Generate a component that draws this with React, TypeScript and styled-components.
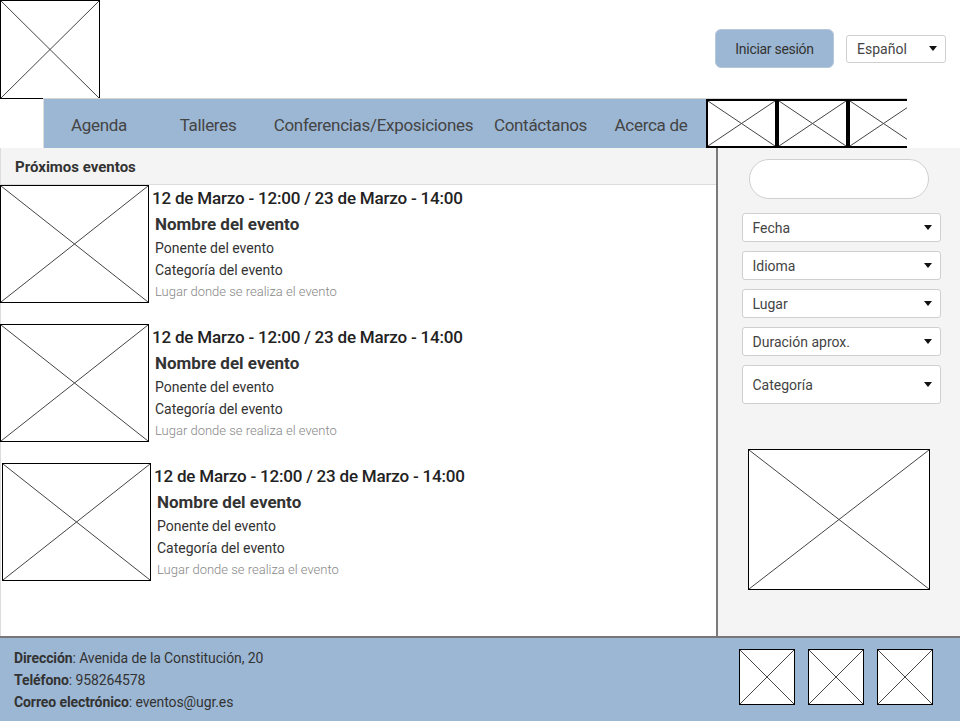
import * as React from 'react'
import styled, { createGlobalStyle } from 'styled-components'

const blue = '#9cb7d4'
const font = `Roboto, "Noto Sans", "Liberation Sans", sans-serif`

const GlobalStyle = createGlobalStyle`
  html, body {
    margin: 0;
    padding: 0;
    background: #fff;
  }
  body {
    font-family: ${font};
    color: #333;
  }
  * {
    box-sizing: border-box;
  }
`

const Page = styled.div`
  width: 960px;
  height: 721px;
  display: flex;
  flex-direction: column;
  overflow: hidden;
`

const Header = styled.header`
  height: 98px;
  display: flex;
  justify-content: space-between;
  align-items: flex-start;
`

const Actions = styled.div`
  display: flex;
  align-items: center;
  gap: 12px;
  margin-top: 29px;
  margin-right: 14px;
`

const LoginButton = styled.button`
  width: 119px;
  height: 39px;
  background: ${blue};
  border: 1px solid #b7c7da;
  border-radius: 6px;
  font-family: ${font};
  font-size: 14px;
  color: #333;
  letter-spacing: -0.3px;
  cursor: pointer;
`

const SelectBox = styled.div<{ $w?: number; $h?: number }>`
  width: ${p => p.$w ?? 199}px;
  height: ${p => p.$h ?? 29}px;
  display: flex;
  align-items: center;
  justify-content: space-between;
  padding: 0 8px 0 10px;
  background: #fff;
  border: 1px solid #cfcfcf;
  border-radius: 3px;
  font-size: 14px;
  color: #444;
`

const Caret = styled.span`
  width: 0;
  height: 0;
  border-left: 4px solid transparent;
  border-right: 4px solid transparent;
  border-top: 5px solid #111;
`

const PlaceholderFrame = styled.div<{ $w: number; $h: number; $bw?: number }>`
  width: ${p => p.$w}px;
  height: ${p => p.$h}px;
  flex: none;
  border: ${p => p.$bw ?? 1}px solid #000;
  background: #fff;
  svg {
    display: block;
    width: 100%;
    height: 100%;
  }
`

const Placeholder = ({ w, h, bw }: { w: number; h: number; bw?: number }) => (
  <PlaceholderFrame $w={w} $h={h} $bw={bw}>
    <svg viewBox="0 0 100 100" preserveAspectRatio="none">
      <line x1="0" y1="0" x2="100" y2="100" stroke="#444" strokeWidth="1" vectorEffect="non-scaling-stroke" />
      <line x1="100" y1="0" x2="0" y2="100" stroke="#444" strokeWidth="1" vectorEffect="non-scaling-stroke" />
    </svg>
  </PlaceholderFrame>
)

const Nav = styled.nav`
  display: flex;
  height: 50px;
  margin-left: 43px;
  width: 864px;
  border-top: 1px solid #d6d6d6;
`

const NavItems = styled.ul`
  display: flex;
  margin: 0;
  padding: 0;
  list-style: none;
  background: ${blue};
  border-left: 1px solid #dcdcdc;
`

const NavItem = styled.li<{ $w: number }>`
  width: ${p => p.$w}px;
  display: flex;
  align-items: center;
  justify-content: center;
  padding-top: 2px;
  font-size: 17px;
  color: #444;
  letter-spacing: -0.3px;
  white-space: nowrap;
`

const NavPics = styled.div`
  display: flex;
  width: 202px;
  overflow: hidden;
`

const Main = styled.main`
  flex: 1;
  display: flex;
  min-height: 0;
`

const Events = styled.section`
  width: 716px;
  border-left: 1px solid #dcdcdc;
  display: flex;
  flex-direction: column;
`

const SectionTitle = styled.h2`
  margin: 0;
  height: 37px;
  padding: 2px 14px 0;
  display: flex;
  align-items: center;
  background: #f4f4f4;
  border-bottom: 1px solid #dcdcdc;
  font-size: 15px;
  font-weight: 700;
  color: #333;
`

const EventList = styled.div`
  display: flex;
  flex-direction: column;
  gap: 21px;
`

const EventRow = styled.article<{ $shift?: number }>`
  display: flex;
  gap: 3px;
  margin-left: ${p => (p.$shift ?? 0) - 1}px;
`

const EventText = styled.div`
  display: flex;
  flex-direction: column;
  padding-top: 1px;
`

const EventDate = styled.div`
  font-size: 17px;
  font-weight: 500;
  line-height: 25px;
  color: #222;
  letter-spacing: -0.2px;
`

const EventName = styled.div`
  font-size: 17px;
  font-weight: 700;
  line-height: 26px;
  color: #333;
  margin-left: 3px;
`

const EventLine = styled.div<{ $muted?: boolean }>`
  font-size: ${p => (p.$muted ? 13 : 14)}px;
  line-height: 22px;
  color: ${p => (p.$muted ? '#888' : '#333')};
  font-weight: ${p => (p.$muted ? 300 : 400)};
  margin-left: 3px;
`

const Sidebar = styled.aside`
  flex: 1;
  background: #f4f4f4;
  border-left: 2px solid #7a7a7a;
  display: flex;
  flex-direction: column;
  align-items: center;
  padding-top: 11px;
`

const Search = styled.input`
  width: 180px;
  height: 40px;
  border: 1px solid #d0d0d0;
  border-radius: 20px;
  background: #fff;
  outline: none;
  margin-bottom: 14px;
`

const Filters = styled.div`
  display: flex;
  flex-direction: column;
  gap: 9px;
  margin-left: 4px;
  margin-bottom: 45px;
`

const Footer = styled.footer`
  height: 85px;
  background: ${blue};
  border-top: 2px solid #777;
  display: flex;
  justify-content: space-between;
  align-items: flex-start;
  padding: 8px 27px 0 14px;
`

const Contact = styled.div`
  display: flex;
  flex-direction: column;
  padding-top: 1px;
`

const ContactLine = styled.div`
  font-size: 14px;
  line-height: 22px;
  color: #333;
  letter-spacing: -0.1px;
  b {
    font-weight: 700;
  }
`

const Social = styled.div`
  display: flex;
  gap: 13px;
  padding-top: 3px;
`

const navLinks: [string, number][] = [
  ['Agenda', 110],
  ['Talleres', 108],
  ['Conferencias/Exposiciones', 223],
  ['Contáctanos', 111],
  ['Acerca de', 110],
]

const filters: [string, number][] = [
  ['Fecha', 29],
  ['Idioma', 29],
  ['Lugar', 29],
  ['Duración aprox.', 29],
  ['Categoría', 39],
]

const events = [0, 0, 2]

export default function App() {
  return (
    <Page>
      <GlobalStyle />
      <Header>
        <Placeholder w={100} h={99} />
        <Actions>
          <LoginButton>Iniciar sesión</LoginButton>
          <SelectBox $w={100} $h={28}>
            Español
            <Caret />
          </SelectBox>
        </Actions>
      </Header>
      <Nav>
        <NavItems>
          {navLinks.map(([label, w]) => (
            <NavItem key={label} $w={w}>
              {label}
            </NavItem>
          ))}
        </NavItems>
        <NavPics>
          <Placeholder w={71} h={49} bw={2} />
          <Placeholder w={71} h={49} bw={2} />
          <Placeholder w={71} h={49} bw={2} />
        </NavPics>
      </Nav>
      <Main>
        <Events>
          <SectionTitle>Próximos eventos</SectionTitle>
          <EventList>
            {events.map((shift, i) => (
              <EventRow key={i} $shift={shift}>
                <Placeholder w={149} h={118} />
                <EventText>
                  <EventDate>12 de Marzo - 12:00 / 23 de Marzo - 14:00</EventDate>
                  <EventName>Nombre del evento</EventName>
                  <EventLine>Ponente del evento</EventLine>
                  <EventLine>Categoría del evento</EventLine>
                  <EventLine $muted>Lugar donde se realiza el evento</EventLine>
                </EventText>
              </EventRow>
            ))}
          </EventList>
        </Events>
        <Sidebar>
          <Search aria-label="Buscar" />
          <Filters>
            {filters.map(([label, h]) => (
              <SelectBox key={label} $h={h}>
                {label}
                <Caret />
              </SelectBox>
            ))}
          </Filters>
          <Placeholder w={182} h={141} />
        </Sidebar>
      </Main>
      <Footer>
        <Contact>
          <ContactLine>
            <b>Dirección</b>: Avenida de la Constitución, 20
          </ContactLine>
          <ContactLine>
            <b>Teléfono</b>: 958264578
          </ContactLine>
          <ContactLine>
            <b>Correo electrónico</b>: eventos@ugr.es
          </ContactLine>
        </Contact>
        <Social>
          <Placeholder w={56} h={56} />
          <Placeholder w={56} h={56} />
          <Placeholder w={56} h={56} />
        </Social>
      </Footer>
    </Page>
  )
}
